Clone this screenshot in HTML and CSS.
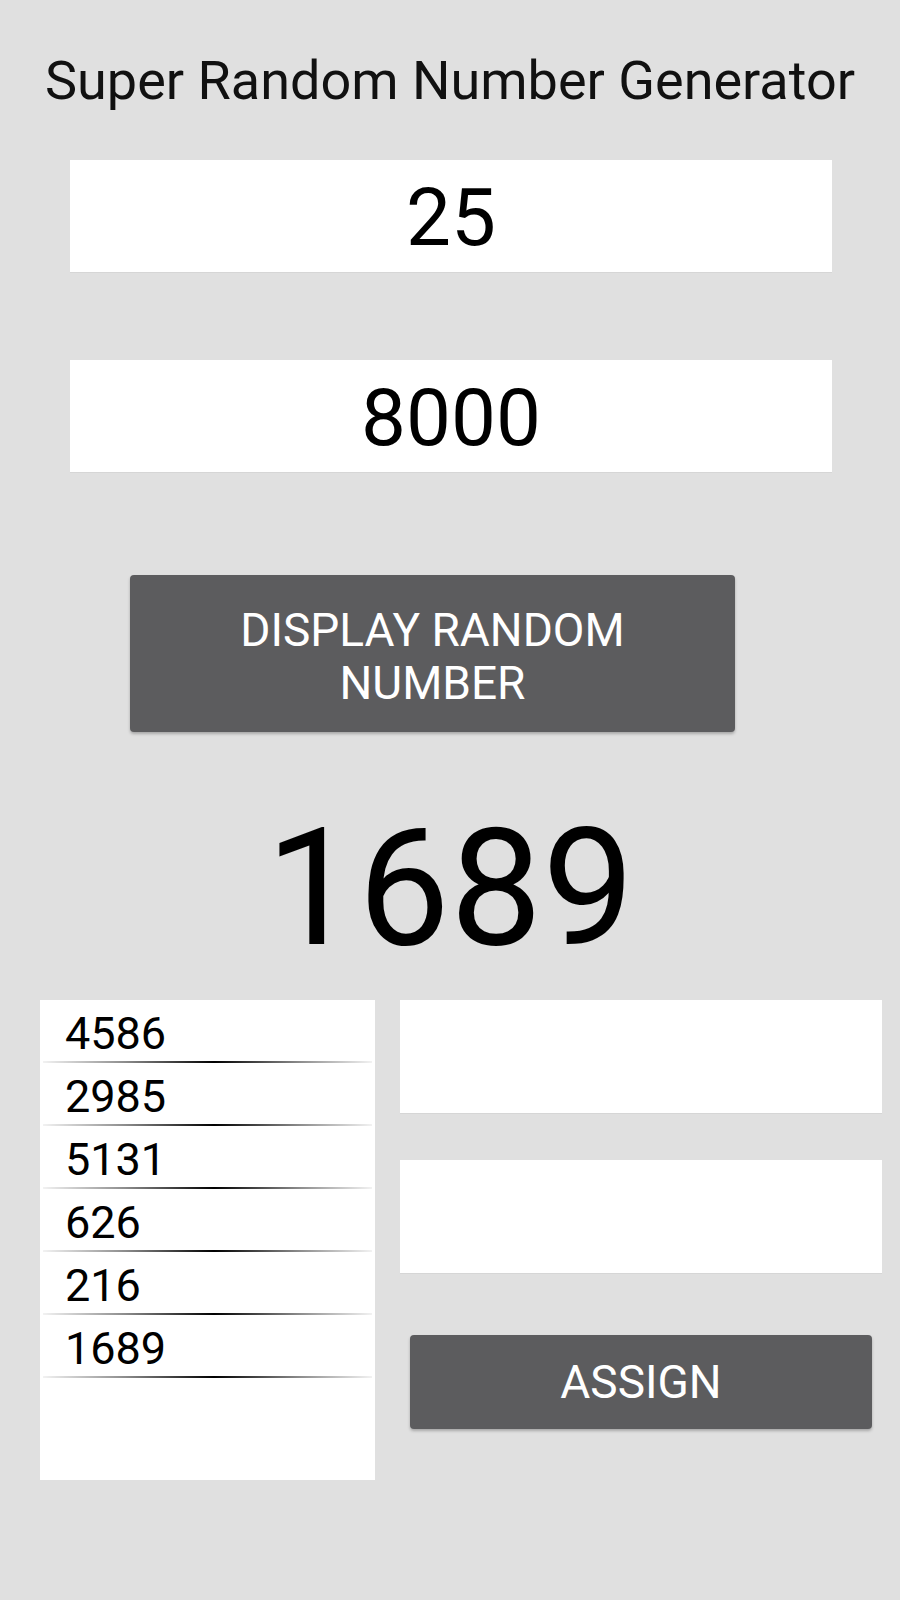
FILE: index.html
```html
<!DOCTYPE html>
<html>
  <head>
    <title>Super Random Number Generator</title>
    <meta http-equiv="Content-Type" content="text/html; charset=UTF-8"/>
    <link rel="stylesheet" href="styles.css">
  </head>
  <body>
    <div class="screen">
      <h1 class="title">Super Random Number Generator</h1>

      <div class="field field-min">25</div>
      <div class="field field-max">8000</div>

      <button class="btn btn-display">DISPLAY RANDOM<br/>NUMBER</button>

      <div class="result">1689</div>

      <div class="bottom">
        <ul class="history">
          <li>4586</li>
          <li>2985</li>
          <li>5131</li>
          <li>626</li>
          <li>216</li>
          <li>1689</li>
        </ul>
        <div class="side">
          <div class="field field-small"></div>
          <div class="field field-small second"></div>
          <button class="btn btn-assign">ASSIGN</button>
        </div>
      </div>
    </div>
  </body>
</html>
```

FILE: styles.css
```css
body {
  margin: 0;
  background-color: #e0e0e0;
  font-family: 'Roboto', 'Noto Sans', sans-serif;
  color: #000;
}

.screen {
  width: 900px;
  height: 1600px;
  display: flex;
  flex-direction: column;
}

.title {
  margin: 51px 0 0;
  font-size: 54px;
  font-weight: normal;
  line-height: 60px;
  text-align: center;
  color: #111;
}

.field {
  background-color: #fff;
  box-shadow: 0 1px 0 #d6d6d6;
}

.field-min,
.field-max {
  width: 762px;
  height: 112px;
  margin-left: 70px;
  font-size: 80px;
  line-height: 112px;
  padding-top: 2px;
  box-sizing: border-box;
  text-align: center;
}

.field-min {
  margin-top: 49px;
}

.field-max {
  margin-top: 88px;
}

.btn {
  border: none;
  border-radius: 4px;
  background-color: #5c5c5e;
  color: #fff;
  font-family: 'Roboto', 'Noto Sans', sans-serif;
  font-size: 46px;
  box-shadow: 0 2px 3px rgba(0, 0, 0, 0.25);
  padding: 0;
}

.btn-display {
  width: 605px;
  height: 157px;
  margin: 103px 0 0 130px;
  padding: 6px 0 0;
  line-height: 53px;
}

.result {
  margin-top: 66px;
  font-size: 164px;
  line-height: 180px;
  text-align: center;
}

.bottom {
  display: flex;
  margin-top: 22px;
}

.history {
  list-style: none;
  margin: 0 0 0 40px;
  padding: 0;
  width: 335px;
  height: 480px;
  background-color: #fff;
}

.history li {
  height: 61px;
  box-sizing: border-box;
  padding: 6px 0 0 22px;
  font-size: 45px;
  line-height: 55px;
  margin: 0 3px 2px;
  position: relative;
}

.history li::after {
  content: "";
  position: absolute;
  left: 0;
  right: 0;
  bottom: -2px;
  height: 2px;
  background: linear-gradient(to right, rgba(0, 0, 0, 0.05), rgba(0, 0, 0, 0.45) 25%, #000 52%, rgba(0, 0, 0, 0.45) 78%, rgba(0, 0, 0, 0.05));
}

.side {
  display: flex;
  flex-direction: column;
  margin-left: 25px;
  width: 482px;
}

.field-small {
  height: 113px;
}

.field-small.second {
  margin-top: 47px;
}

.btn-assign {
  height: 94px;
  margin: 62px 10px 0;
  line-height: 94px;
}
```
